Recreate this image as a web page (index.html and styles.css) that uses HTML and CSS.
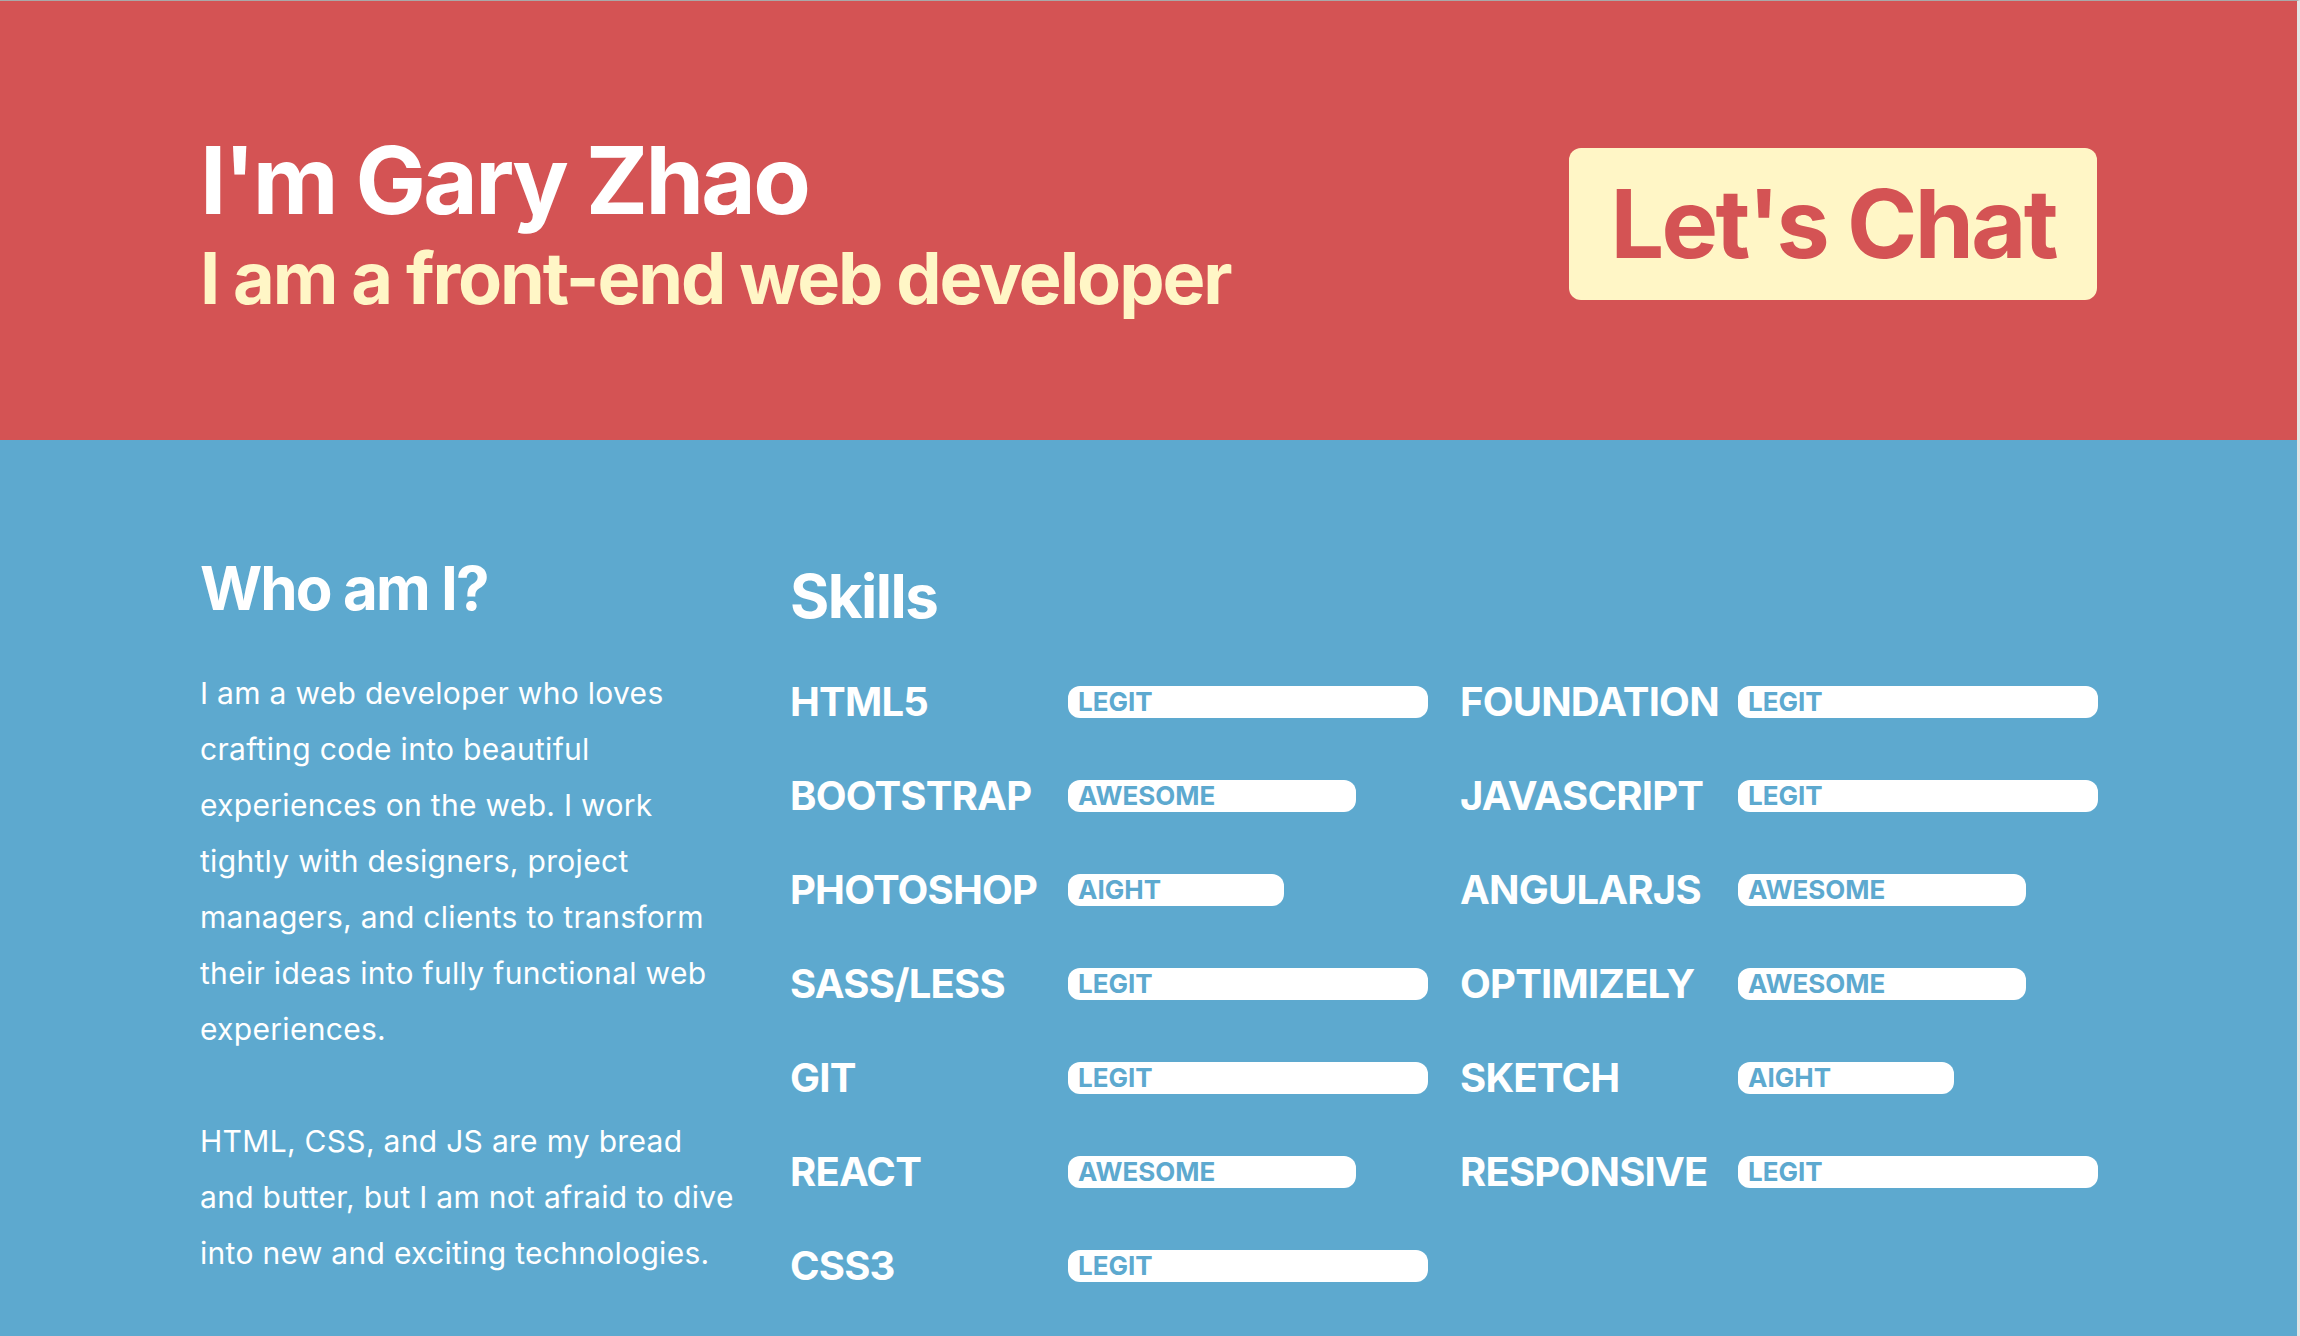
FILE: index.html
```html
<!DOCTYPE html>
<html lang="en">
<head>
<meta charset="utf-8">
<title>Gary Zhao</title>
<link rel="stylesheet" href="styles.css">
</head>
<body>
<header class="hero">
  <div class="hero-text">
    <h1 class="hero-name">I'm Gary Zhao</h1>
    <h2 class="hero-role">I am a front-end web developer</h2>
  </div>
  <a class="chat-btn" href="#">Let's Chat</a>
</header>
<main class="about">
  <section class="bio">
    <h2 class="section-title">Who am I?</h2>
    <p class="bio-text">I am a web developer who loves<br>crafting code into beautiful<br>experiences on the web. I work<br>tightly with designers, project<br>managers, and clients to transform<br>their ideas into fully functional web<br>experiences.</p>
    <p class="bio-text">HTML, CSS, and JS are my bread<br>and butter, but I am not afraid to dive<br>into new and exciting technologies.</p>
  </section>
  <section class="skills">
    <h2 class="section-title skills-title">Skills</h2>
    <div class="skill-cols">
      <ul class="skill-list">
        <li class="skill"><span class="skill-name">HTML5</span><span class="skill-track"><span class="skill-bar" style="width:100%">LEGIT</span></span></li>
        <li class="skill"><span class="skill-name">BOOTSTRAP</span><span class="skill-track"><span class="skill-bar" style="width:80%">AWESOME</span></span></li>
        <li class="skill"><span class="skill-name">PHOTOSHOP</span><span class="skill-track"><span class="skill-bar" style="width:60%">AIGHT</span></span></li>
        <li class="skill"><span class="skill-name">SASS/LESS</span><span class="skill-track"><span class="skill-bar" style="width:100%">LEGIT</span></span></li>
        <li class="skill"><span class="skill-name">GIT</span><span class="skill-track"><span class="skill-bar" style="width:100%">LEGIT</span></span></li>
        <li class="skill"><span class="skill-name">REACT</span><span class="skill-track"><span class="skill-bar" style="width:80%">AWESOME</span></span></li>
        <li class="skill"><span class="skill-name">CSS3</span><span class="skill-track"><span class="skill-bar" style="width:100%">LEGIT</span></span></li>
      </ul>
      <ul class="skill-list">
        <li class="skill"><span class="skill-name">FOUNDATION</span><span class="skill-track"><span class="skill-bar" style="width:100%">LEGIT</span></span></li>
        <li class="skill"><span class="skill-name">JAVASCRIPT</span><span class="skill-track"><span class="skill-bar" style="width:100%">LEGIT</span></span></li>
        <li class="skill"><span class="skill-name">ANGULARJS</span><span class="skill-track"><span class="skill-bar" style="width:80%">AWESOME</span></span></li>
        <li class="skill"><span class="skill-name">OPTIMIZELY</span><span class="skill-track"><span class="skill-bar" style="width:80%">AWESOME</span></span></li>
        <li class="skill"><span class="skill-name">SKETCH</span><span class="skill-track"><span class="skill-bar" style="width:60%">AIGHT</span></span></li>
        <li class="skill"><span class="skill-name">RESPONSIVE</span><span class="skill-track"><span class="skill-bar" style="width:100%">LEGIT</span></span></li>
      </ul>
    </div>
  </section>
</main>
</body>
</html>
```
FILE: styles.css
```css
* { box-sizing: border-box; }

html, body {
  margin: 0;
  padding: 0;
  height: 100%;
}

body {
  font-family: Inter, "Noto Sans", "Liberation Sans", sans-serif;
  background: #5da9cf;
  border-top: 1px solid #a9a9a9;
  border-right: 3px solid #e4e4e4;
  overflow: hidden;
}

.hero {
  background: #d45354;
  height: 439px;
  padding: 6px 200px 0 200px;
  display: flex;
  justify-content: space-between;
  align-items: center;
}

.hero-name {
  margin: 0;
  font-size: 94px;
  line-height: 1;
  font-weight: 700;
  color: #ffffff;
  letter-spacing: -2.7px;
}

.hero-role {
  margin: 15px 0 0 0;
  font-size: 72px;
  line-height: 1;
  font-weight: 700;
  color: #fff6c6;
  letter-spacing: -2.1px;
}

.chat-btn {
  display: block;
  height: 152px;
  line-height: 152px;
  padding: 0 41px 0 41px;
  background: #fff6c6;
  color: #d45354;
  border-radius: 12px;
  font-size: 95px;
  font-weight: 700;
  text-decoration: none;
  letter-spacing: -2.6px;
}

.about {
  display: grid;
  grid-template-columns: 560px 1fr;
  column-gap: 30px;
  padding: 118px 200px 0 200px;
}

.section-title {
  margin: 0;
  font-size: 60px;
  line-height: 1;
  font-weight: 700;
  color: #ffffff;
  letter-spacing: -1.9px;
}

.skills-title {
  margin-top: 8px;
  letter-spacing: -1.5px;
}

.bio-text {
  margin: 47px 0 0 0;
  font-size: 30px;
  line-height: 56px;
  letter-spacing: 0.3px;
  color: #ffffff;
}

.bio-text + .bio-text {
  margin-top: 56px;
}

.skill-cols {
  margin-top: 60px;
  display: grid;
  grid-template-columns: 1fr 1fr;
  column-gap: 32px;
}

.skill-list {
  list-style: none;
  margin: 0;
  padding: 0;
  display: flex;
  flex-direction: column;
  gap: 62px;
}

.skill {
  display: flex;
  align-items: center;
  height: 32px;
}

.skill-name {
  flex: 0 0 278px;
  font-size: 40px;
  font-weight: 700;
  color: #ffffff;
  line-height: 1;
  letter-spacing: -0.8px;
  white-space: nowrap;
}

.skill-track {
  flex: 0 0 360px;
  display: block;
}

.skill-bar {
  display: block;
  height: 32px;
  line-height: 32px;
  padding-left: 10px;
  background: #ffffff;
  border-radius: 12px;
  color: #5da9cf;
  font-size: 26px;
  font-weight: 700;
}
```
